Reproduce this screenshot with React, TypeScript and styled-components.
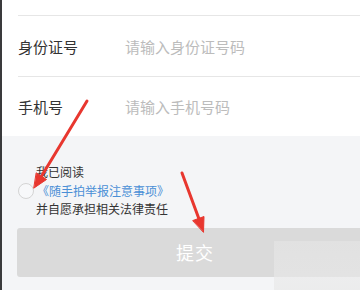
import React from "react";
import styled, { createGlobalStyle } from "styled-components";

const Global = createGlobalStyle`
  html, body { margin: 0; padding: 0; background: #f4f5f7; overflow: hidden; }
  body { font-family: "Noto Sans CJK SC", "Noto Sans", sans-serif; }
`;

const Screen = styled.div`
  position: relative;
  width: 358px;
  height: 290px;
  border-left: 2px solid #3a3a3c;
  background: #f4f5f7;
  overflow: hidden;
`;

const Form = styled.div`
  background: #fff;
  padding-left: 16px;
`;

const Row = styled.div<{ $h: number; $last?: boolean }>`
  display: grid;
  grid-template-columns: 107px 1fr;
  align-items: center;
  height: ${(p) => p.$h}px;
  border-bottom: ${(p) => (p.$last ? "none" : "1px solid #e6e6e6")};
`;

const Label = styled.span`
  font-size: 15px;
  color: #333;
`;

const Placeholder = styled.span`
  font-size: 15px;
  color: #bcbcbc;
`;

const Agree = styled.div`
  display: flex;
  align-items: center;
  gap: 2px;
  padding: 27px 0 0 16px;
`;

const Radio = styled.span`
  width: 14px;
  height: 14px;
  border-radius: 50%;
  border: 1px solid #d4d4d4;
  background: #f7f8fa;
  flex: none;
`;

const AgreeText = styled.div`
  display: flex;
  flex-direction: column;
  font-size: 12px;
  line-height: 18.5px;
  color: #333;
`;

const Link = styled.span`
  color: #4a8fd6;
  margin-left: 1px;
`;

const Submit = styled.button`
  display: block;
  box-sizing: border-box;
  margin: 9px 0 0 15px;
  width: calc(100% - 15px);
  height: 49px;
  padding: 0 0 0 13px;
  border: none;
  border-radius: 3px 0 0 3px;
  background: #dadada;
  color: #fff;
  font-family: inherit;
  font-size: 18px;
  letter-spacing: 1px;
`;

const Watermark = styled.div`
  position: absolute;
  left: 272px;
  top: 241px;
  right: 0;
  bottom: 0;
  background: linear-gradient(180deg, rgba(234, 234, 234, 0.45), rgba(232, 232, 232, 0.7));
  pointer-events: none;
`;

const Arrows = styled.svg`
  position: absolute;
  left: -2px;
  top: 0;
  pointer-events: none;
`;

export default function App() {
  return (
    <>
      <Global />
      <Screen>
        <Form>
          <Row $h={15} />
          <Row $h={60}>
            <Label>身份证号</Label>
            <Placeholder>请输入身份证号码</Placeholder>
          </Row>
          <Row $h={59} $last>
            <Label>手机号</Label>
            <Placeholder>请输入手机号码</Placeholder>
          </Row>
        </Form>
        <Agree>
          <Radio />
          <AgreeText>
            <span>我已阅读</span>
            <Link>《随手拍举报注意事项》</Link>
            <span>并自愿承担相关法律责任</span>
          </AgreeText>
        </Agree>
        <Submit>提交</Submit>
        <Watermark />
        <Arrows width="360" height="290" viewBox="0 0 360 290">
          <g stroke="#e8372f" strokeWidth="3" strokeLinecap="round" fill="#e8372f">
            <line x1="87" y1="101" x2="41" y2="177" />
            <polygon points="34,188 46.5,179.5 36.5,173" strokeWidth="1" strokeLinejoin="round" />
            <line x1="182" y1="173" x2="199" y2="219" />
            <polygon points="203.5,232 204,216.5 193,220.5" strokeWidth="1" strokeLinejoin="round" />
          </g>
        </Arrows>
      </Screen>
    </>
  );
}
